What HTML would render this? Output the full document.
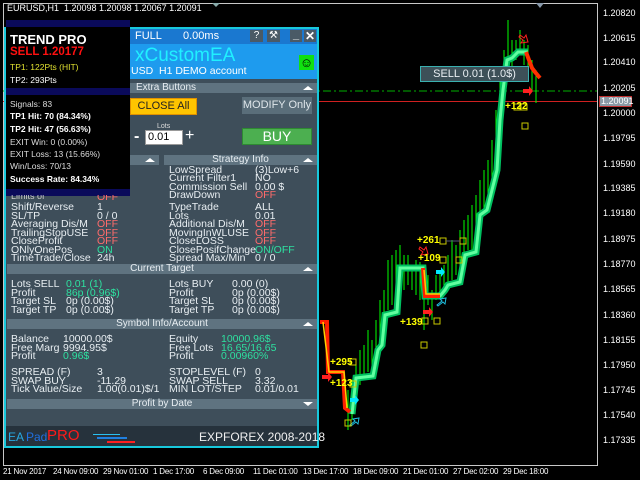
<!DOCTYPE html>
<html><head><meta charset="utf-8">
<style>
*{margin:0;padding:0;box-sizing:border-box}
body{width:640px;height:480px;background:#000;position:relative;overflow:hidden;font-family:"Liberation Sans",sans-serif;font-size:11px;color:#fff}
.a{position:absolute;white-space:nowrap;line-height:1}
.ax{position:absolute;font-size:9px;color:#fff;left:603px;white-space:nowrap;line-height:1}
.tx{position:absolute;font-size:8px;letter-spacing:-0.2px;color:#fff;top:468px;white-space:nowrap;line-height:1}
.sh{position:absolute;background:#5f7380;height:10px;font-size:10px;color:#e8eef2;text-align:center;line-height:10px}
.tri{position:absolute;right:4px;top:3px;width:0;height:0;border-left:5px solid transparent;border-right:5px solid transparent;border-bottom:4px solid #fff}
.p{color:#e8eef2;font-size:10.5px}
.off{color:#ff6b6b}
.gr{color:#2ee0a0}
.y{color:#ffff00;font-weight:bold;font-size:10px}
</style></head><body>
<div class="a" style="left:7px;top:4px;font-size:9px">EURUSD,H1&nbsp; 1.20098 1.20098 1.20067 1.20091</div>
<div style="position:absolute;left:3px;top:3px;width:595px;height:463px;border:1px solid #c8c8c8"></div>
<div style="position:absolute;left:212px;top:3px;width:0;height:0;border-left:4px solid transparent;border-right:4px solid transparent;border-top:4px solid #8aa"></div>
<div style="position:absolute;left:536px;top:3px;width:0;height:0;border-left:4px solid transparent;border-right:4px solid transparent;border-top:5px solid #8899aa"></div>
<svg style="position:absolute;left:0;top:0" width="640" height="480">
<line x1="3" y1="91" x2="597" y2="91" stroke="#00b000" stroke-dasharray="8,3,2,3"/>
<line x1="3" y1="101.5" x2="597" y2="101.5" stroke="#d02020"/>
<g stroke="#00ff00" stroke-width="1">
<path d="M348 390V430M352 380V420M356 360V400M360 350V385M364 345V380M368 330V372M372 340V370M376 320V360M380 300V345M384 290V320M388 260V310M392 255V305M396 250V300M400 245V275M404 255V290M408 255V285M412 265V290M416 260V295M420 262V300M424 270V330M428 275V305M432 290V320M436 275V300M440 270V295M444 265V290M448 255V285M452 240V280M456 245V275M460 230V275M464 220V260M468 215V250M472 205V250M476 195V245M480 180V215M484 170V210M488 160V205M492 140V190M496 110V170M500 80V130M504 50V100M508 20V70M512 40V70M516 40V60M520 30V55M524 40V65M528 45V80M532 60V90M536 70V103"/>
</g>
<polyline fill="none" stroke="#00c060" stroke-width="7" points="352,414 356,378 373,376 378,350 382,345 385,315 397,312 400,268 423,268 425,296 440,296 445,290 448,285 460,282 465,255 476,252 480,215 487,210 492,190 497,170 500,120 503,90 507,60 512,58 518,52 528,52"/>
<polyline fill="none" stroke="#60ffa0" stroke-width="3" points="352,414 356,378 373,376 378,350 382,345 385,315 397,312 400,268 423,268 425,296 440,296 445,290 448,285 460,282 465,255 476,252 480,215 487,210 492,190 497,170 500,120 503,90 507,60 512,58 518,52 528,52"/>
<polyline fill="none" stroke="#ff2000" stroke-width="4" points="320,322 327,322 328,372 343,372 345,408 350,412"/>
<polyline fill="none" stroke="#ff2000" stroke-width="4" points="423,268 425,296 440,296"/>
<polyline fill="none" stroke="#ff3000" stroke-width="4" points="526,52 532,68 535,72 540,78"/>
<polyline fill="none" stroke="#ffd000" stroke-width="1.5" points="323,322 329,372 344,372 347,408"/>
<polyline fill="none" stroke="#ffd000" stroke-width="1.5" points="424,270 426,294 440,294"/>
<g fill="#ff2020"><path d="M322 375h6v-3l4 5-4 5v-3h-6z"/><path d="M423 310h6v-3l4 5-4 5v-3h-6z"/><path d="M523 89h6v-3l4 5-4 5v-3h-6z"/></g>
<g fill="#00e8ff"><path d="M350 398h5v-3l4 5-4 5v-3h-5z"/><path d="M436 270h5v-3l4 5-4 5v-3h-5z"/></g>
<g fill="none" stroke="#ff2020"><path d="M520 35l4 3 2-3 2 7-7 1 2-3-4-3z"/><path d="M420 247l4 3 2-3 2 7-7 1 2-3-4-3z"/></g>
<g fill="none" stroke="#20c0e0"><path d="M350 425l5-4-2-2 6-1-1 6-2-2-5 4z"/><path d="M437 305l5-4-2-2 6-1-1 6-2-2-5 4z"/></g>
<g fill="none" stroke="#c8c800"><rect x="514" y="104" width="6" height="6"/><rect x="521" y="104" width="6" height="6"/><rect x="522" y="123" width="6" height="6"/><rect x="440" y="238" width="6" height="6"/><rect x="460" y="238" width="6" height="6"/><rect x="440" y="257" width="6" height="6"/><rect x="456" y="257" width="6" height="6"/><rect x="422" y="318" width="6" height="6"/><rect x="434" y="318" width="6" height="6"/><rect x="421" y="342" width="6" height="6"/><rect x="350" y="359" width="6" height="6"/><rect x="350" y="381" width="6" height="6"/><rect x="345" y="420" width="6" height="6"/></g>
<line x1="446" y1="241" x2="460" y2="241" stroke="#557"/>
</svg>
<div class="a y" style="left:505px;top:102px">+122</div>
<div class="a y" style="left:417px;top:236px">+261</div>
<div class="a y" style="left:418px;top:254px">+109</div>
<div class="a y" style="left:400px;top:318px">+139</div>
<div class="a y" style="left:330px;top:358px">+295</div>
<div class="a y" style="left:330px;top:379px">+123</div>
<div class="a" style="left:420px;top:66px;width:109px;height:16px;background:#3d5058;border:1px solid #3ab0b0;color:#e8eef2;font-size:11px;text-align:center;line-height:14px">SELL 0.01 (1.0$)</div>
<div class="ax" style="top:9px">1.20820</div><div class="ax" style="top:34px">1.20615</div><div class="ax" style="top:58px">1.20410</div><div class="ax" style="top:84px">1.20205</div><div class="ax" style="top:109px">1.20000</div><div class="ax" style="top:134px">1.19795</div><div class="ax" style="top:160px">1.19590</div><div class="ax" style="top:184px">1.19385</div><div class="ax" style="top:209px">1.19180</div><div class="ax" style="top:235px">1.18975</div><div class="ax" style="top:260px">1.18770</div><div class="ax" style="top:285px">1.18565</div><div class="ax" style="top:311px">1.18360</div><div class="ax" style="top:336px">1.18155</div><div class="ax" style="top:361px">1.17950</div><div class="ax" style="top:386px">1.17745</div><div class="ax" style="top:411px">1.17540</div><div class="ax" style="top:436px">1.17335</div>
<div class="a" style="left:599px;top:96px;width:33px;height:11px;background:#8a9aa6;border:1px solid #c03030;font-size:9px;color:#fff;line-height:9px;padding-left:1px">1.20091</div>
<div class="tx" style="left:3px">21 Nov 2017</div><div class="tx" style="left:53px">24 Nov 09:00</div><div class="tx" style="left:103px">29 Nov 01:00</div><div class="tx" style="left:153px">1 Dec 17:00</div><div class="tx" style="left:203px">6 Dec 09:00</div><div class="tx" style="left:253px">11 Dec 01:00</div><div class="tx" style="left:303px">13 Dec 17:00</div><div class="tx" style="left:353px">18 Dec 09:00</div><div class="tx" style="left:403px">21 Dec 01:00</div><div class="tx" style="left:453px">27 Dec 02:00</div><div class="tx" style="left:503px">29 Dec 18:00</div>
<div style="position:absolute;left:4px;top:27px;width:315px;height:421px;border:2px solid #18c8dc;background:#3e4e5a"></div>
<div style="position:absolute;left:6px;top:29px;width:311px;height:15px;background:#1a78d0"></div>
<div class="a" style="left:135px;top:31px;font-size:11px">FULL</div>
<div class="a" style="left:183px;top:31px;font-size:11px">0.00ms</div>
<div class="a" style="left:250px;top:30px;width:13px;height:12px;background:#4a5a66;text-align:center;font-size:10px;line-height:12px">?</div>
<div class="a" style="left:267px;top:30px;width:13px;height:12px;background:#4a5a66;text-align:center;font-size:10px;line-height:12px">⚒</div>
<div class="a" style="left:290px;top:30px;width:12px;height:12px;background:#4a5a66;text-align:center;font-size:11px;line-height:10px;font-weight:bold">_</div>
<div class="a" style="left:304px;top:30px;width:12px;height:12px;background:#4a5a66;text-align:center;font-size:12px;line-height:12px;font-weight:bold">✕</div>
<div style="position:absolute;left:6px;top:44px;width:311px;height:35px;background:#1e9bee"></div>
<div class="a" style="left:135px;top:46px;font-size:19px;color:#20f0ff">xCustomEA</div>
<div class="a" style="left:131px;top:66px;font-size:10.5px">USD&nbsp; H1 DEMO account</div>
<div class="a" style="left:299px;top:55px;width:15px;height:15px;background:#10e010;color:#000;font-size:13px;text-align:center;line-height:15px">☺</div>
<div class="sh" style="left:6px;top:83px;width:311px;text-align:left;padding-left:130px">Extra Buttons<div class="tri"></div></div>
<div class="a" style="left:130px;top:98px;width:67px;height:17px;background:#ffc400;border:1px solid #e09000;color:#222;font-size:11px;text-align:center;line-height:15px">CLOSE All</div>
<div class="a" style="left:242px;top:97px;width:70px;height:17px;background:#5a6e7a;color:#dfe6ea;font-size:11px;text-align:center;line-height:17px">MODIFY Only</div>
<div class="a" style="left:157px;top:123px;font-size:7px;color:#ddd">Lots</div>
<div class="a" style="left:134px;top:129px;font-size:16px;font-weight:bold">-</div>
<div class="a" style="left:145px;top:130px;width:38px;height:15px;background:#fff;border:1px solid #999;color:#000;font-size:11px;padding-left:2px;line-height:13px">0.01</div>
<div class="a" style="left:185px;top:128px;font-size:16px">+</div>
<div class="a" style="left:242px;top:128px;width:70px;height:17px;background:#4caf50;border:1px solid #2e8a32;color:#fff;font-size:14px;text-align:center;line-height:15px">BUY</div>
<div class="sh" style="left:7px;top:155px;width:152px"><div class="tri"></div></div>
<div class="sh" style="left:164px;top:155px;width:153px">Strategy Info<div class="tri"></div></div>
<div class="a p" style="left:169px;top:166px;line-height:8.4px">LowSpread<br>Current Filter1<br>Commission Sell<br>DrawDown</div>
<div class="a p" style="left:255px;top:166px;line-height:8.4px">(3)Low+6<br>NO<br>0.00 $<br><span class="off">OFF</span></div>
<div class="a p" style="left:11px;top:203px;line-height:8.5px">Shift/Reverse<br>SL/TP<br>Averaging Dis/M<br>TrailingStopUSE<br>CloseProfit<br>ONlyOnePos<br>TimeTrade/Close</div>
<div class="a p" style="left:97px;top:203px;line-height:8.5px">1<br>0 / 0<br><span class="off">OFF</span><br><span class="off">OFF</span><br><span class="off">OFF</span><br><span class="gr">ON</span><br>24h</div>
<div class="a p" style="left:169px;top:203px;line-height:8.5px">TypeTrade<br>Lots<br>Additional Dis/M<br>MovingInWLUSE<br>CloseLOSS<br>ClosePosifChange<br>Spread Max/Min</div>
<div class="a p" style="left:255px;top:203px;line-height:8.5px">ALL<br>0.01<br><span class="off">OFF</span><br><span class="off">OFF</span><br><span class="off">OFF</span><br><span class="gr">ON/OFF</span><br>0 / 0</div>
<div class="sh" style="left:7px;top:264px;width:310px">Current Target<div class="tri"></div></div>
<div class="a p" style="left:11px;top:280px;line-height:8.5px">Lots SELL<br>Profit<br>Target SL<br>Target TP</div>
<div class="a p" style="left:66px;top:280px;line-height:8.5px"><span class="gr">0.01 (1)<br>86p (0.96$)</span><br>0p (0.00$)<br>0p (0.00$)</div>
<div class="a p" style="left:169px;top:280px;line-height:8.5px">Lots BUY<br>Profit<br>Target SL<br>Target TP</div>
<div class="a p" style="left:232px;top:280px;line-height:8.5px">0.00 (0)<br>0p (0.00$)<br>0p (0.00$)<br>0p (0.00$)</div>
<div class="sh" style="left:7px;top:319px;width:310px">Symbol Info/Account<div class="tri"></div></div>
<div class="a p" style="left:11px;top:335px;line-height:8.5px">Balance<br>Free Marg<br>Profit</div>
<div class="a p" style="left:63px;top:335px;line-height:8.5px">10000.00$<br>9994.95$<br><span class="gr">0.96$</span></div>
<div class="a p" style="left:169px;top:335px;line-height:8.5px">Equity<br>Free Lots<br>Profit</div>
<div class="a p gr" style="left:221px;top:335px;line-height:8.5px">10000.96$<br>16.65/16.65<br>0.00960%</div>
<div class="a p" style="left:11px;top:368px;line-height:8.5px">SPREAD (F)<br>SWAP BUY<br>Tick Value/Size</div>
<div class="a p" style="left:97px;top:368px;line-height:8.5px">3<br>-11.29<br>1.00(0.01)$/1</div>
<div class="a p" style="left:169px;top:368px;line-height:8.5px">STOPLEVEL (F)<br>SWAP SELL<br>MIN LOT/STEP</div>
<div class="a p" style="left:255px;top:368px;line-height:8.5px">0<br>3.32<br>0.01/0.01</div>
<div class="sh" style="left:7px;top:399px;width:310px">Profit by Date<div style="position:absolute;right:4px;top:3px;border-left:5px solid transparent;border-right:5px solid transparent;border-top:4px solid #fff"></div></div>
<div style="position:absolute;left:6px;top:426px;width:311px;height:20px;background:#26323c"></div>
<div class="a" style="left:8px;top:431px;font-size:12px;color:#29a8e0">EA</div>
<div class="a" style="left:26px;top:431px;font-size:12px;color:#2070e0">Pad</div>
<div class="a" style="left:47px;top:428px;font-size:15px;color:#ff1a1a">PRO</div>
<div style="position:absolute;left:93px;top:434px;width:27px;height:1px;background:#29c0f0"></div>
<div style="position:absolute;left:97px;top:437px;width:30px;height:2px;background:#2080e0"></div>
<div style="position:absolute;left:107px;top:441px;width:28px;height:2px;background:#ff2020"></div>
<div class="a" style="left:199px;top:431px;font-size:12px;color:#f0f0f0">EXPFOREX 2008-2018</div>
<div style="position:absolute;left:6px;top:20px;width:124px;height:176px;background:#000"></div>
<div style="position:absolute;left:6px;top:20px;width:124px;height:7px;background:#0a0a5a"></div>
<div style="position:absolute;left:6px;top:88px;width:124px;height:7px;background:#0a0a5a"></div>
<div style="position:absolute;left:6px;top:189px;width:124px;height:7px;background:#0a0a5a"></div>
<div class="a" style="left:10px;top:33px;font-size:13px;font-weight:bold">TREND PRO</div>
<div class="a" style="left:10px;top:47px;font-size:11.5px;font-weight:bold;color:#ff1010">SELL 1.20177</div>
<div class="a" style="left:10px;top:63px;font-size:8.5px;color:#e0e030">TP1: 122Pts (HIT)</div>
<div class="a" style="left:10px;top:76px;font-size:8.5px">TP2: 293Pts</div>
<div class="a" style="left:10px;top:100px;font-size:8.5px;color:#ddd">Signals: 83</div>
<div class="a" style="left:10px;top:112px;font-size:8.5px;font-weight:bold">TP1 Hit: 70 (84.34%)</div>
<div class="a" style="left:10px;top:125px;font-size:8.5px;font-weight:bold">TP2 Hit: 47 (56.63%)</div>
<div class="a" style="left:10px;top:138px;font-size:8.5px;color:#ddd">EXIT Win: 0 (0.00%)</div>
<div class="a" style="left:10px;top:150px;font-size:8.5px;color:#ddd">EXIT Loss: 13 (15.66%)</div>
<div class="a" style="left:10px;top:162px;font-size:8.5px;color:#ddd">Win/Loss: 70/13</div>
<div class="a" style="left:10px;top:175px;font-size:8.5px;font-weight:bold">Success Rate: 84.34%</div>
<div class="a p" style="left:11px;top:192px;font-size:9px;color:#ccc;clip-path:inset(3px 0 0 0)">Limits of</div>
<div class="a p off" style="left:97px;top:192px;clip-path:inset(3px 0 0 0)">OFF</div>
</body></html>
